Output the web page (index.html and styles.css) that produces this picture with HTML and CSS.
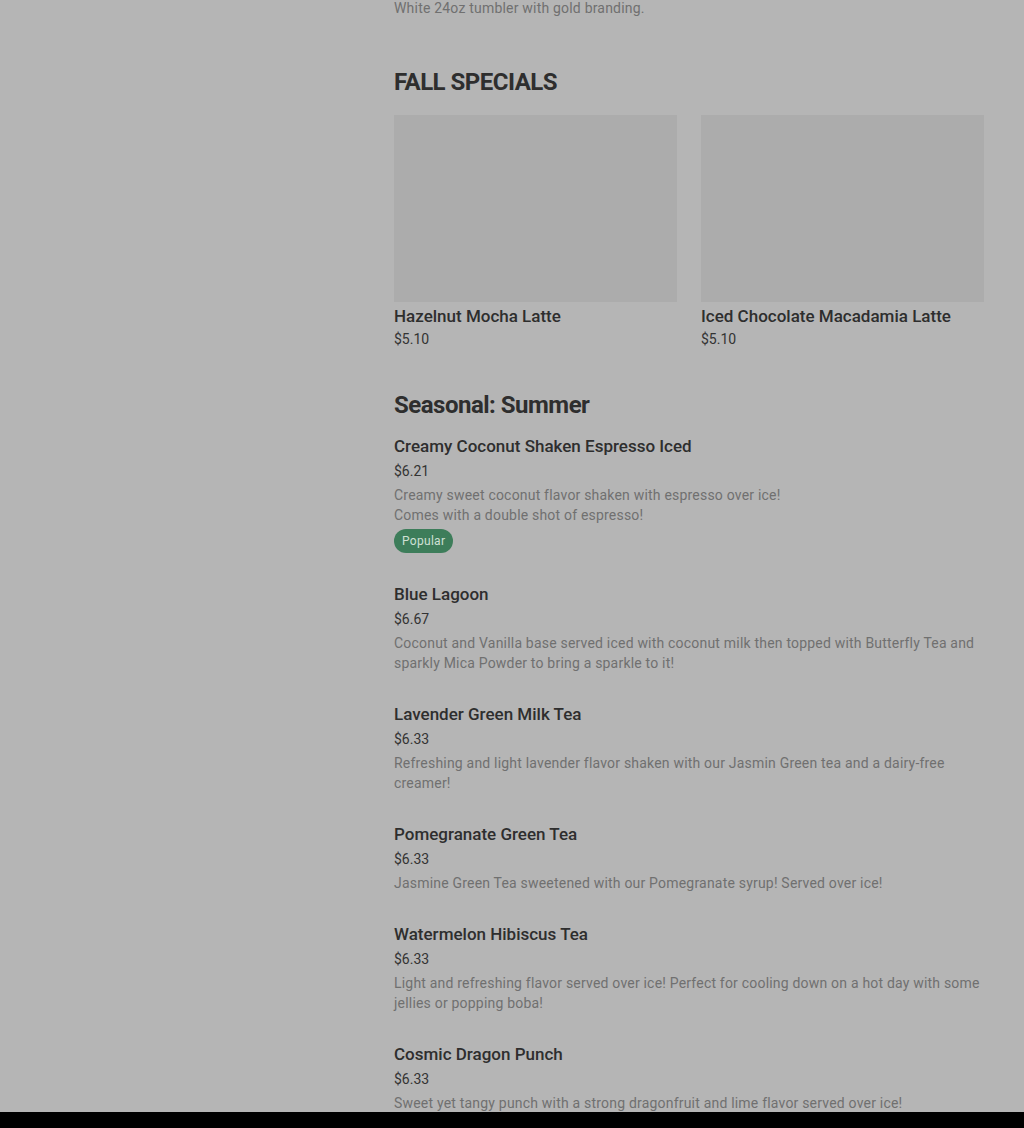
FILE: index.html
```html
<!DOCTYPE html>
<html lang="en">
<head>
  <meta charset="UTF-8" />
  <meta name="viewport" content="width=device-width, initial-scale=1.0"/>
  <title>Menu</title>
  <link rel="stylesheet" href="styles.css">
</head>
<body>
  <div class="page">
    <aside class="sidebar"></aside>

    <main class="menu">
      <p class="desc first">White 24oz tumbler with gold branding.</p>

      <section class="section">
        <h2>FALL SPECIALS</h2>
        <div class="cards">
          <div class="card">
            <div class="card-img"></div>
            <div class="item-name">Hazelnut Mocha Latte</div>
            <div class="price">$5.10</div>
          </div>
          <div class="card">
            <div class="card-img"></div>
            <div class="item-name">Iced Chocolate Macadamia Latte</div>
            <div class="price">$5.10</div>
          </div>
        </div>
      </section>

      <section class="section">
        <h2>Seasonal: Summer</h2>

        <div class="item">
          <div class="item-name">Creamy Coconut Shaken Espresso Iced</div>
          <div class="price">$6.21</div>
          <p class="desc">Creamy sweet coconut flavor shaken with espresso over ice!<br>Comes with a double shot of espresso!</p>
          <span class="badge">Popular</span>
        </div>

        <div class="item">
          <div class="item-name">Blue Lagoon</div>
          <div class="price">$6.67</div>
          <p class="desc">Coconut and Vanilla base served iced with coconut milk then topped with Butterfly Tea and sparkly Mica Powder to bring a sparkle to it!</p>
        </div>

        <div class="item">
          <div class="item-name">Lavender Green Milk Tea</div>
          <div class="price">$6.33</div>
          <p class="desc">Refreshing and light lavender flavor shaken with our Jasmin Green tea and a dairy-free creamer!</p>
        </div>

        <div class="item">
          <div class="item-name">Pomegranate Green Tea</div>
          <div class="price">$6.33</div>
          <p class="desc">Jasmine Green Tea sweetened with our Pomegranate syrup! Served over ice!</p>
        </div>

        <div class="item">
          <div class="item-name">Watermelon Hibiscus Tea</div>
          <div class="price">$6.33</div>
          <p class="desc">Light and refreshing flavor served over ice! Perfect for cooling down on a hot day with some jellies or popping boba!</p>
        </div>

        <div class="item">
          <div class="item-name">Cosmic Dragon Punch</div>
          <div class="price">$6.33</div>
          <p class="desc">Sweet yet tangy punch with a strong dragonfruit and lime flavor served over ice!</p>
        </div>
      </section>
    </main>
  </div>

  <div class="bottom-bar"></div>
</body>
</html>
```

FILE: styles.css
```css
body {
  margin: 0;
  font-family: Roboto, 'Liberation Sans', Arial, sans-serif;
  background: #b5b5b5;
  color: #2e2e2e;
}

.page {
  display: grid;
  grid-template-columns: 394px 590px;
  padding-bottom: 40px;
}

h2 {
  margin: 0;
  font-size: 24px;
  line-height: 32px;
  font-weight: 700;
  letter-spacing: -0.5px;
}

.section {
  margin-top: 48px;
}

.section + .section {
  margin-top: 40px;
}

.cards {
  display: grid;
  grid-template-columns: 1fr 1fr;
  gap: 24px;
  margin-top: 17px;
}

.card-img {
  height: 187px;
  background: #acacac;
  margin-bottom: 2px;
}

.item-name {
  font-size: 17px;
  line-height: 24px;
  font-weight: 500;
}

.card .price {
  margin-top: 1px;
}

.price {
  font-size: 14px;
  line-height: 20px;
  margin-top: 3px;
  color: #333;
}

.desc {
  margin: 4px 0 0;
  font-size: 14px;
  line-height: 20px;
  letter-spacing: 0.2px;
  color: #707070;
}

.desc.first {
  margin-top: -2px;
}

.item {
  margin-top: 29px;
}

.section h2 + .item {
  margin-top: 13px;
}

.badge {
  display: inline-block;
  margin-top: 4px;
  padding: 0 8px;
  font-size: 12px;
  line-height: 24px;
  letter-spacing: 0.3px;
  border-radius: 12px;
  background: #3d7d5a;
  color: #cfe0d5;
}

.bottom-bar {
  position: fixed;
  left: 0;
  right: 0;
  bottom: 0;
  height: 16px;
  background: #000;
}
```
